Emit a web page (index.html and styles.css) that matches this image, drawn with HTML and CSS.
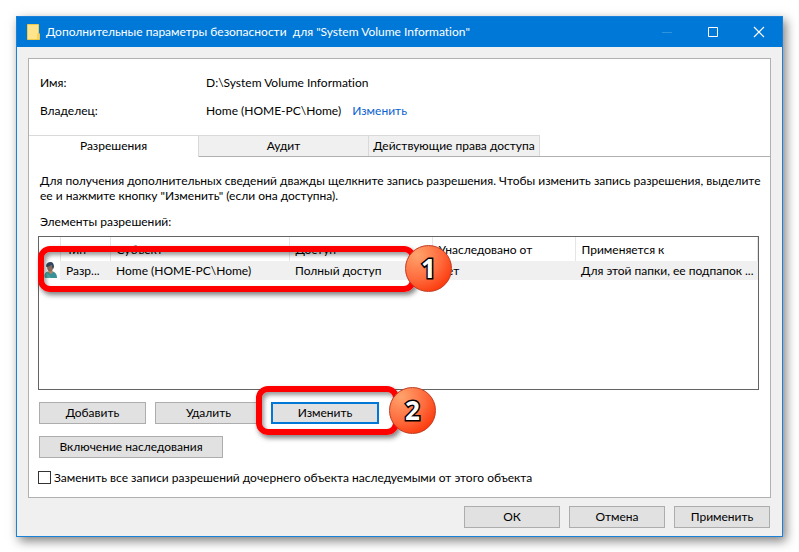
FILE: index.html
```html
<!DOCTYPE html>
<html lang="ru">

<head>
    <meta charset="UTF-8">
    <meta name="viewport" content="width=device-width, initial-scale=1.0">
    <title>Дополнительные параметры безопасности</title>
    <link rel="stylesheet" href="styles.css">
</head>

<body>

    <div class="window">
        <!-- Заголовок окна -->
        <header class="titlebar">
            <svg class="folder" width="13" height="16" viewBox="0 0 13 16">
                <path d="M0.5 0.5h11v8.500l1 1v5.500h-12z" fill="#ffe48c" stroke="#f0c94a" />
                <path d="M11 9.500v6" stroke="#eebf3c" />
            </svg>
            <h1 class="caption">Дополнительные параметры безопасности&nbsp; для "System Volume Information"</h1>
            <div class="controls">
                <button class="control" type="button" aria-label="Свернуть" disabled>
                    <svg width="12" height="12" viewBox="0 0 12 12"><path d="M1 6.500h10" stroke="#2f93e0" /></svg>
                </button>
                <button class="control" type="button" aria-label="Развернуть">
                    <svg width="12" height="12" viewBox="0 0 12 12"><path d="M1.500 1.500h9v9h-9z" fill="none" stroke="#fff" /></svg>
                </button>
                <button class="control" type="button" aria-label="Закрыть">
                    <svg width="12" height="12" viewBox="0 0 12 12"><path d="M1 1l10 10M11 1L1 11" stroke="#fff" stroke-width="1.200" /></svg>
                </button>
            </div>
        </header>

        <main class="panel">
            <dl class="details">
                <dt>Имя:</dt>
                <dd>D:\System Volume Information</dd>
                <dt>Владелец:</dt>
                <dd>Home (HOME-PC\Home) <a class="change" href="#">Изменить</a></dd>
            </dl>

            <!-- Вкладки -->
            <nav class="tabs">
                <button class="tab active" type="button">Разрешения</button>
                <button class="tab" type="button">Аудит</button>
                <button class="tab" type="button">Действующие права доступа</button>
            </nav>

            <section class="content">
                <p class="hint">Для получения дополнительных сведений дважды щелкните запись разрешения. Чтобы изменить запись разрешения, выделите ее и нажмите кнопку "Изменить" (если она доступна).</p>
                <p class="label" id="listLabel">Элементы разрешений:</p>

                <div class="list">
                    <table class="entries" aria-labelledby="listLabel">
                        <colgroup>
                            <col class="col-icon">
                            <col class="col-type">
                            <col class="col-subject">
                            <col class="col-access">
                            <col class="col-inherited">
                            <col>
                        </colgroup>
                        <thead>
                            <tr>
                                <th></th>
                                <th>Тип</th>
                                <th>Субъект</th>
                                <th>Доступ</th>
                                <th>Унаследовано от</th>
                                <th>Применяется к</th>
                            </tr>
                        </thead>
                        <tbody>
                            <tr>
                                <td class="user">
                                    <svg width="13" height="17" viewBox="0 0 13 17">
                                        <path d="M1 16c-1-3 0-6 3-6.500l2 .5 3-.5c3 1 4 3.500 4 6.500z" fill="#3a9296" />
                                        <path d="M4 8l1 3 2 1 2-2-1-2z" fill="#b9855d" />
                                        <path d="M3 4c0 3 1 5.500 3 5.500s3.500-2 3.500-5.500z" fill="#8b6b5c" />
                                        <path d="M2 4.500c0-3 2-4.500 4.500-4.500S10 2 10 5L9 7 7.500 3.500 3 5z" fill="#34465c" />
                                        <path d="M1 16c-1-3 0-5 2-6l4 6z" fill="#4ba9a4" />
                                    </svg>
                                </td>
                                <td>Разр...</td>
                                <td>Home (HOME-PC\Home)</td>
                                <td>Полный доступ</td>
                                <td>Нет</td>
                                <td>Для этой папки, ее подпапок ...</td>
                            </tr>
                        </tbody>
                    </table>
                    <div class="mark mark-row"><span class="badge">1</span></div>
                </div>

                <div class="actions">
                    <button class="btn" type="button">Добавить</button>
                    <button class="btn" type="button">Удалить</button>
                    <div class="marked">
                        <button class="btn focused" type="button">Изменить</button>
                        <div class="mark mark-button"><span class="badge">2</span></div>
                    </div>
                </div>
                <div class="actions">
                    <button class="btn wide" type="button">Включение наследования</button>
                </div>

                <div class="replace">
                    <input class="check" type="checkbox" id="replaceAll">
                    <label for="replaceAll">Заменить все записи разрешений дочернего объекта наследуемыми от этого объекта</label>
                </div>
            </section>
        </main>

        <footer class="footer">
            <button class="btn" type="button">ОК</button>
            <button class="btn" type="button">Отмена</button>
            <button class="btn" type="button">Применить</button>
        </footer>
    </div>

</body>

</html>
```
FILE: styles.css
```css
* {
    box-sizing: border-box;
}

body {
    margin: 0;
    padding: 16px 16px 15px;
    background: #fff;
    color: #000;
    font-family: Lato, "Noto Sans", sans-serif;
    font-size: 12px;
    font-variant-ligatures: none;
    line-height: 15px;
}

button {
    font: inherit;
    color: inherit;
}

.window {
    background: #f0f0f0;
    border: 1px solid #1a80d8;
    box-shadow: 3px 4px 10px rgba(0, 0, 0, 0.5);
}

.titlebar {
    display: flex;
    align-items: center;
    height: 30px;
    padding-left: 10px;
    background: #0078d7;
    color: #fff;
}

.caption {
    flex: 1;
    margin: 0 0 0 6px;
    font-size: 12px;
    font-weight: normal;
    line-height: 14px;
    white-space: nowrap;
}

.controls {
    display: flex;
}

.control {
    display: flex;
    align-items: center;
    justify-content: center;
    width: 46px;
    height: 28px;
    padding: 0;
    border: 0;
    background: none;
}

.panel {
    margin: 11px 11px 0;
    background: #fff;
    border: 1px solid #b0b0b0;
}

.details {
    display: grid;
    grid-template-columns: 166px 1fr;
    row-gap: 13px;
    margin: 0;
    padding: 16px 11px 17px;
}

.details dd {
    margin: 0;
}

.change {
    margin-left: 8px;
    color: #0b62d0;
    text-decoration: none;
}

.tabs {
    display: flex;
    height: 22px;
    border-bottom: 1px solid #b0b0b0;
}

.tab {
    width: 170px;
    padding: 0 0 1px;
    background: #f0f0f0;
    border: 1px solid #d9d9d9;
    border-width: 1px 1px 0 0;
    white-space: nowrap;
}

.tab:last-child {
    width: 171px;
}

.tab.active {
    height: 22px;
    padding-bottom: 2px;
    background: #fff;
}

.content {
    padding: 16px 11px 12px 9px;
}

.hint,
.label {
    margin: 0 0 11px 2px;
}

.hint {
    margin-right: -8px;
}

.label {
    margin-bottom: 7px;
}

.list {
    position: relative;
    height: 154px;
    border: 1px solid #646464;
}

.entries {
    width: 100%;
    table-layout: fixed;
    border-collapse: collapse;
}

.col-icon {
    width: 21px;
}

.col-type {
    width: 50px;
}

.col-subject {
    width: 179px;
}

.col-access,
.col-inherited {
    width: 143px;
}

.entries th,
.entries td {
    padding: 0 0 0 6px;
    font-weight: normal;
    text-align: left;
    white-space: nowrap;
}

.entries th {
    height: 24px;
    border-right: 1px solid #e5e5e5;
}

.entries td {
    height: 19px;
    background: #f0f0f0;
}

.entries .user {
    padding: 0 0 0 5px;
    background: #fff;
}

.user svg {
    display: block;
}

/* Красные рамки с номерами шагов */
.mark {
    position: absolute;
    border: 6px solid #f00;
    border-radius: 12px;
    box-shadow: 2px 3px 5px rgba(0, 0, 0, 0.5), inset 2px 3px 4px rgba(0, 0, 0, 0.4);
    pointer-events: none;
}

.mark-row {
    top: 9px;
    left: -1px;
    width: 378px;
    height: 46px;
}

.mark-button {
    inset: -16px -20px -11px -15px;
}

.badge {
    position: absolute;
    top: 50%;
    right: -42px;
    width: 47px;
    height: 47px;
    margin-top: -24px;
    border: 1px solid #c03a20;
    border-radius: 50%;
    background: radial-gradient(circle at 25% 20%, #ffa36c, #ff6a3c 50%, #fb3508 85%);
    color: #fff;
    font-family: "Open Sans", "Noto Sans", sans-serif;
    font-size: 26px;
    font-weight: bold;
    line-height: 44px;
    text-align: center;
    -webkit-text-stroke: 3px #000;
    paint-order: stroke fill;
}

.mark-button .badge {
    right: -43px;
}

.actions {
    display: flex;
    gap: 9px;
    margin: 12px 0 0 1px;
}

.marked {
    position: relative;
}

.btn {
    display: block;
    width: 107px;
    height: 22px;
    padding: 0;
    background: #e1e1e1;
    border: 1px solid #adadad;
    line-height: 18px;
    white-space: nowrap;
}

.btn.focused {
    width: 108px;
    border: 2px solid #0078d7;
}

.btn.wide {
    width: 184px;
}

.replace {
    display: flex;
    align-items: center;
    gap: 3px;
    margin-top: 12px;
}

.check {
    appearance: none;
    width: 13px;
    height: 13px;
    margin: 0;
    background: #fff;
    border: 1px solid #333;
}

.footer {
    display: flex;
    justify-content: flex-end;
    gap: 9px;
    padding: 8px 12px;
}

.footer .btn {
    width: 96px;
}
```
